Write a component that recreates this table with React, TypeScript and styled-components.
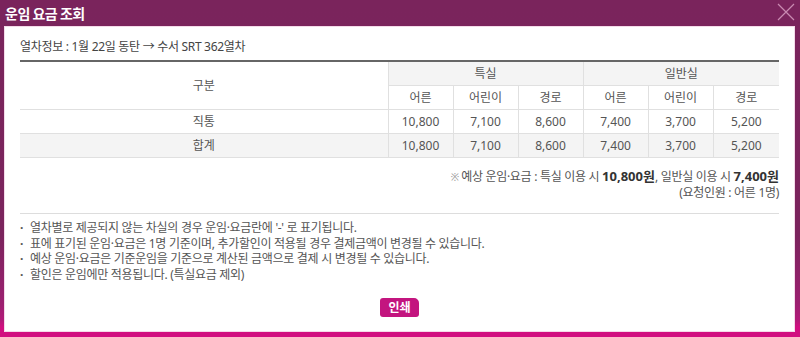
import React from 'react';
import styled, { createGlobalStyle } from 'styled-components';

const GlobalStyle = createGlobalStyle`
  html, body {
    margin: 0;
    padding: 0;
    background: #ffffff;
  }
`;

const FONT = `'Noto Sans', 'Noto Sans CJK KR', sans-serif`;

type FareRow = {
  label: string;
  values: string[];
  total?: boolean;
};

const rows: FareRow[] = [
  { label: '직통', values: ['10,800', '7,100', '8,600', '7,400', '3,700', '5,200'] },
  { label: '합계', values: ['10,800', '7,100', '8,600', '7,400', '3,700', '5,200'], total: true },
];

const notices = [
  "열차별로 제공되지 않는 차실의 경우 운임·요금란에 '-' 로 표기됩니다.",
  '표에 표기된 운임·요금은 1명 기준이며, 추가할인이 적용될 경우 결제금액이 변경될 수 있습니다.',
  '예상 운임·요금은 기준운임을 기준으로 계산된 금액으로 결제 시 변경될 수 있습니다.',
  '할인은 운임에만 적용됩니다. (특실요금 제외)',
];

const Frame = styled.div`
  width: 800px;
  height: 337px;
  box-sizing: border-box;
  display: flex;
  flex-direction: column;
  padding: 0 5px 5px 4px;
  background: linear-gradient(to bottom, #7a245c 0%, #7b245d 70%, #9c2070 90%, #b21a78 95%, #d10f80 97%, #d10f80 100%);
  font-family: ${FONT};
`;

const Header = styled.div`
  height: 26px;
  display: flex;
  align-items: center;
  justify-content: space-between;
  margin-right: -5px;
  padding-left: 1px;
`;

const Title = styled.h1`
  margin: 0;
  color: #ffffff;
  font-family: 'Noto Sans CJK KR', sans-serif;
  font-size: 14px;
  font-weight: 700;
  letter-spacing: -0.5px;
  line-height: 26px;
`;

const CloseButton = styled.button`
  width: 22px;
  height: 22px;
  margin-right: 3px;
  margin-top: -2px;
  padding: 0;
  border: none;
  background: transparent;
  display: flex;
  align-items: center;
  justify-content: center;
  cursor: pointer;
`;

const Body = styled.div`
  flex: 1;
  background: #ffffff;
  padding: 13px 16px 0 16px;
  display: flex;
  flex-direction: column;
  color: #555555;
  font-size: 12px;
  letter-spacing: -0.3px;
  box-shadow: inset 0 0 0 1px #f4dbe9;
`;

const TrainInfo = styled.p`
  margin: 0;
  color: #444444;
  font-size: 12px;
  line-height: 16px;
`;

const Table = styled.table`
  width: 759px;
  margin-top: 5px;
  border-collapse: collapse;
  border-top: 2px solid #666666;
  table-layout: fixed;
  font-size: 12px;
  letter-spacing: 0;
`;

const Th = styled.th<{ $shaded?: boolean; $first?: boolean }>`
  height: 23px;
  padding: 0;
  font-weight: 400;
  color: #555555;
  text-align: center;
  background: ${({ $shaded }) => ($shaded ? '#f4f4f4' : '#ffffff')};
  border-bottom: 1px solid #e0e0e0;
  border-left: ${({ $first }) => ($first ? 'none' : '1px solid #e0e0e0')};
  line-height: 16px;
`;

const Tr = styled.tr<{ $total?: boolean }>`
  background: ${({ $total }) => ($total ? '#f4f4f4' : '#ffffff')};
`;

const Td = styled.td<{ $first?: boolean }>`
  height: 23px;
  padding: 0;
  text-align: center;
  color: #555555;
  border-bottom: 1px solid #e0e0e0;
  border-left: ${({ $first }) => ($first ? 'none' : '1px solid #e0e0e0')};
  line-height: 16px;
`;

const Summary = styled.div`
  margin-top: 10px;
  width: 759px;
  display: flex;
  flex-direction: column;
  align-items: flex-end;
  color: #555555;
  font-size: 12px;
  line-height: 16px;
`;

const SummaryLine = styled.div`
  display: flex;
  align-items: baseline;
  height: 17px;
  white-space: pre;
`;

const Mark = styled.span`
  color: #999999;
  font-size: 10px;
`;

const Amount = styled.strong`
  color: #333333;
  font-size: 13px;
  font-weight: 700;
  line-height: 16px;
  letter-spacing: 0;
`;

const Divider = styled.hr`
  width: 759px;
  margin: 11px 0 0 0;
  border: none;
  border-top: 1px solid #dddddd;
`;

const NoticeList = styled.ul`
  margin: 6px 0 0 0;
  padding: 0;
  list-style: none;
`;

const Notice = styled.li`
  color: #555555;
  font-size: 12px;
  line-height: 15.5px;
  height: 15.5px;
  &::before {
    content: '·';
    display: inline-block;
    width: 10px;
    font-weight: 700;
  }
`;

const ButtonRow = styled.div`
  margin-top: 16px;
  display: flex;
  justify-content: center;
`;

const PrintButton = styled.button`
  width: 39px;
  height: 19px;
  padding: 0;
  border: none;
  border-radius: 3px 5px 3px 3px;
  background: #c3157f;
  color: #ffffff;
  font-family: ${FONT};
  font-size: 12px;
  font-weight: 700;
  line-height: 19px;
  cursor: pointer;
`;

const CloseIcon = () => (
  <svg width="18" height="18" viewBox="0 0 18 18">
    <path d="M1 1 L17 17 M17 1 L1 17" stroke="#c98ab1" strokeWidth="1.2" fill="none" />
  </svg>
);

export default function App() {
  return (
    <>
      <GlobalStyle />
      <Frame>
        <Header>
          <Title>운임 요금 조회</Title>
          <CloseButton aria-label="닫기">
            <CloseIcon />
          </CloseButton>
        </Header>
        <Body>
          <TrainInfo>열차정보 : 1월 22일 동탄 → 수서 SRT 362열차</TrainInfo>
          <Table>
            <colgroup>
              <col style={{ width: 368 }} />
              <col style={{ width: 65 }} />
              <col style={{ width: 65 }} />
              <col style={{ width: 65 }} />
              <col style={{ width: 65 }} />
              <col style={{ width: 65 }} />
              <col style={{ width: 66 }} />
            </colgroup>
            <thead>
              <tr>
                <Th rowSpan={2} $first>
                  구분
                </Th>
                <Th colSpan={3} $shaded>
                  특실
                </Th>
                <Th colSpan={3} $shaded>
                  일반실
                </Th>
              </tr>
              <tr>
                <Th>어른</Th>
                <Th>어린이</Th>
                <Th>경로</Th>
                <Th>어른</Th>
                <Th>어린이</Th>
                <Th>경로</Th>
              </tr>
            </thead>
            <tbody>
              {rows.map((row) => (
                <Tr key={row.label} $total={row.total}>
                  <Td $first>{row.label}</Td>
                  {row.values.map((v, i) => (
                    <Td key={i}>{v}</Td>
                  ))}
                </Tr>
              ))}
            </tbody>
          </Table>
          <Summary>
            <SummaryLine>
              <Mark>※ </Mark>예상 운임·요금 : 특실 이용 시 <Amount>10,800원</Amount>, 일반실 이용 시{' '}
              <Amount>7,400원</Amount>
            </SummaryLine>
            <SummaryLine>(요청인원 : 어른 1명)</SummaryLine>
          </Summary>
          <Divider />
          <NoticeList>
            {notices.map((n) => (
              <Notice key={n}>{n}</Notice>
            ))}
          </NoticeList>
          <ButtonRow>
            <PrintButton>인쇄</PrintButton>
          </ButtonRow>
        </Body>
      </Frame>
    </>
  );
}
